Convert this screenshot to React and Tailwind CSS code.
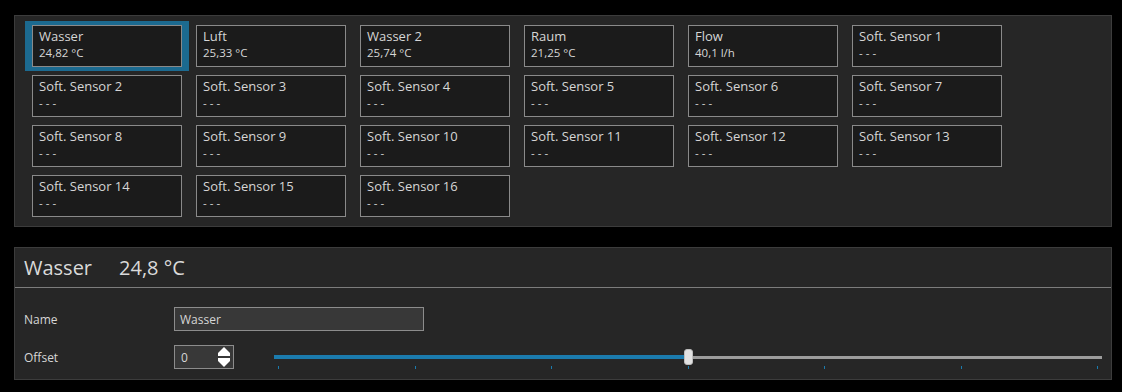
import React from 'react';

const sensors = [
  { name: 'Wasser', value: '24,82 °C' },
  { name: 'Luft', value: '25,33 °C' },
  { name: 'Wasser 2', value: '25,74 °C' },
  { name: 'Raum', value: '21,25 °C' },
  { name: 'Flow', value: '40,1 l/h' },
  ...Array.from({ length: 16 }, (_, i) => ({ name: `Soft. Sensor ${i + 1}`, value: '- - -' })),
];

function Tile({ sensor, selected }) {
  return (
    <div
      className={
        'h-[42px] w-[150px] bg-[#1b1b1b] border border-[#8a8a8a] pl-[6px] pt-[2px] leading-none ' +
        (selected ? 'shadow-[-3px_0_0_4px_#1c6a90,3px_0_0_4px_#1c6a90]' : '')
      }
    >
      <div className="text-[13px] text-[#d6d6d6] h-[17px] flex items-center">{sensor.name}</div>
      <div className="text-[11.5px] text-[#d6d6d6] h-[16px] flex items-center">{sensor.value}</div>
    </div>
  );
}

function Spinner() {
  return (
    <svg width="14" height="21" viewBox="0 0 14 21" className="text-white">
      <polygon points="7,0 13,6 13,9 1,9 1,6" fill="currentColor" />
      <polygon points="1,11 13,11 13,14 7,20 1,14" fill="currentColor" />
    </svg>
  );
}

function Slider() {
  const ticks = [0, 1, 2, 3, 4, 5, 6];
  return (
    <div className="flex-1 flex flex-col">
      <div className="h-[16px] flex items-center">
        <div className="h-[4px] w-[410px] bg-[#1b7bad]" />
        <div className="h-[16px] w-[9px] rounded-[3px] bg-[#e2e2e2] border border-[#bdbdbd]" />
        <div className="flex-1 h-[3px] bg-[#9c9c9c]" />
      </div>
      <div className="flex justify-between px-[4px] pt-[1px]">
        {ticks.map(t => (
          <div key={t} className="w-[1px] h-[3px] bg-[#1b7bad]" />
        ))}
      </div>
    </div>
  );
}

export default function App() {
  return (
    <div className="w-[1122px] h-[392px] bg-black pt-[15px] pl-[14px] font-['Open_Sans',sans-serif] text-[#d6d6d6]">
      <div className="w-[1098px] h-[212px] bg-[#262626] border border-[#3c3c3c] pl-[17px] pt-[9px]">
        <div className="grid grid-cols-[repeat(6,150px)] gap-x-[14px] gap-y-[8px]">
          {sensors.map((s, i) => (
            <Tile key={s.name} sensor={s} selected={i === 0} />
          ))}
        </div>
      </div>

      <div className="mt-[20px] w-[1098px] h-[133px] bg-[#262626] border border-[#3c3c3c]">
        <div className="h-[40px] border-b border-[#7c7c7c] flex items-center pl-[9px] gap-[27px] text-[20px] text-[#dadada]">
          <span>Wasser</span>
          <span>24,8 °C</span>
        </div>
        <div className="pl-[9px] pr-[9px] pt-[19px] flex flex-col gap-[14px] text-[12px]">
          <div className="flex items-center h-[24px]">
            <div className="w-[150px] pt-[2px]">Name</div>
            <div className="w-[250px] h-[24px] bg-[#383838] border border-[#8c8c8c] flex items-center pl-[5px] pt-[2px]">
              Wasser
            </div>
          </div>
          <div className="flex items-center h-[24px]">
            <div className="w-[150px] pt-[2px]">Offset</div>
            <div className="w-[60px] h-[24px] bg-[#383838] border border-[#8c8c8c] flex items-center justify-between pl-[6px] pr-[2px]">
              <span className="pt-[1px]">0</span>
              <Spinner />
            </div>
            <div className="ml-[40px] flex-1 flex pt-[4px]">
              <Slider />
            </div>
          </div>
        </div>
      </div>
    </div>
  );
}
